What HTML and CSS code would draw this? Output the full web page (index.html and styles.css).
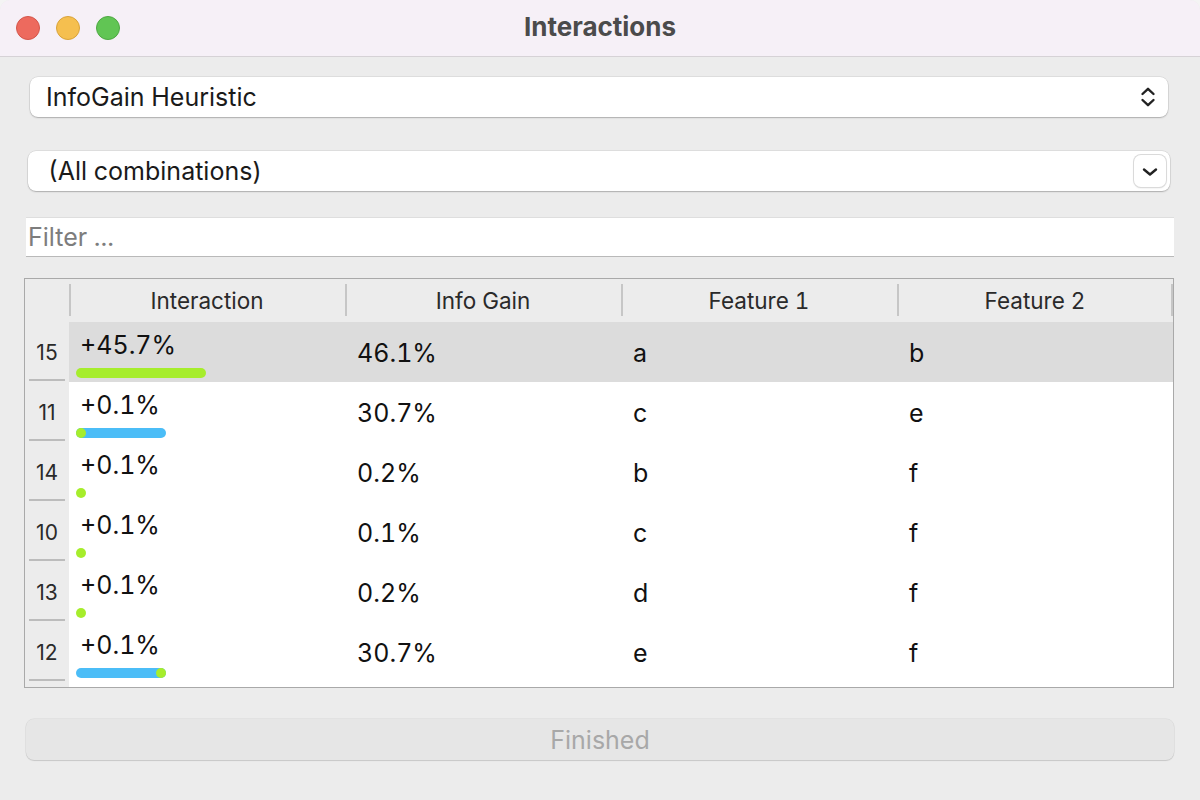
FILE: index.html
```html
<!DOCTYPE html>
<html>
<head>
<meta charset="utf-8">
<link rel="stylesheet" href="styles.css">
</head>
<body>
<div class="window">
  <div class="titlebar">
    <div class="lights">
      <span class="light red"></span>
      <span class="light yellow"></span>
      <span class="light green"></span>
    </div>
    <div class="title">Interactions</div>
  </div>
  <div class="content">
    <div class="combo combo-a">
      <span class="combo-text">InfoGain Heuristic</span>
      <svg class="updown" width="16" height="22" viewBox="0 0 16 22">
        <path d="M2.5 8 L8 2.8 L13.5 8" fill="none" stroke="#222" stroke-width="2.4" stroke-linecap="round" stroke-linejoin="round"/>
        <path d="M2.5 14 L8 19.2 L13.5 14" fill="none" stroke="#222" stroke-width="2.4" stroke-linecap="round" stroke-linejoin="round"/>
      </svg>
    </div>
    <div class="combo combo-b">
      <span class="combo-text">(All combinations)</span>
      <span class="drop-btn">
        <svg width="16" height="10" viewBox="0 0 16 10">
          <path d="M2 2.5 L8 7.5 L14 2.5" fill="none" stroke="#222" stroke-width="2.4" stroke-linecap="round" stroke-linejoin="round"/>
        </svg>
      </span>
    </div>
    <div class="filter">Filter ...</div>
    <div class="table">
      <div class="thead">
        <div class="th corner"></div>
        <div class="th">Interaction</div>
        <div class="th">Info Gain</div>
        <div class="th">Feature 1</div>
        <div class="th">Feature 2</div>
      </div>
      <div class="tbody">
        <div class="tr selected">
          <div class="rn">15</div>
          <div class="td inter">
            <div class="itext">+45.7%</div>
            <div class="bar"><span class="seg green" style="width:130px"></span></div>
          </div>
          <div class="td">46.1%</div>
          <div class="td">a</div>
          <div class="td">b</div>
        </div>
        <div class="tr">
          <div class="rn">11</div>
          <div class="td inter">
            <div class="itext">+0.1%</div>
            <div class="bar"><span class="seg blue" style="width:90px"></span><span class="dot" style="left:0px"></span></div>
          </div>
          <div class="td">30.7%</div>
          <div class="td">c</div>
          <div class="td">e</div>
        </div>
        <div class="tr">
          <div class="rn">14</div>
          <div class="td inter">
            <div class="itext">+0.1%</div>
            <div class="bar"><span class="dot" style="left:0px"></span></div>
          </div>
          <div class="td">0.2%</div>
          <div class="td">b</div>
          <div class="td">f</div>
        </div>
        <div class="tr">
          <div class="rn">10</div>
          <div class="td inter">
            <div class="itext">+0.1%</div>
            <div class="bar"><span class="dot" style="left:0px"></span></div>
          </div>
          <div class="td">0.1%</div>
          <div class="td">c</div>
          <div class="td">f</div>
        </div>
        <div class="tr">
          <div class="rn">13</div>
          <div class="td inter">
            <div class="itext">+0.1%</div>
            <div class="bar"><span class="dot" style="left:0px"></span></div>
          </div>
          <div class="td">0.2%</div>
          <div class="td">d</div>
          <div class="td">f</div>
        </div>
        <div class="tr">
          <div class="rn">12</div>
          <div class="td inter">
            <div class="itext">+0.1%</div>
            <div class="bar"><span class="seg blue" style="width:90px"></span><span class="dot" style="left:80px"></span></div>
          </div>
          <div class="td">30.7%</div>
          <div class="td">e</div>
          <div class="td">f</div>
        </div>
      </div>
    </div>
    <div class="finish">Finished</div>
  </div>
</div>
</body>
</html>
```

FILE: styles.css
```css
* { box-sizing: border-box; }
html, body {
  margin: 0;
  padding: 0;
  background: #f4f4f4;
}
body {
  font-family: Inter, "Liberation Sans", Arial, sans-serif;
  color: #111;
  font-variant-numeric: tabular-nums;
}
.window {
  width: 1200px;
  height: 800px;
  background: #ececec;
  border-radius: 10px 10px 0 0;
  overflow: hidden;
  display: flex;
  flex-direction: column;
}
.titlebar {
  height: 57px;
  background: #f6f0f7;
  border-bottom: 1px solid #d6d2d6;
  position: relative;
  display: flex;
  align-items: center;
  justify-content: center;
  flex: none;
}
.lights {
  position: absolute;
  left: 16px;
  top: 16px;
  display: flex;
  gap: 16px;
}
.light {
  width: 24px;
  height: 24px;
  border-radius: 50%;
  display: block;
}
.light.red { background: #ed6a5e; border: 1px solid #d4564b; }
.light.yellow { background: #f5bf4f; border: 1px solid #d9a33a; }
.light.green { background: #61c554; border: 1px solid #4ea843; }
.title {
  font-size: 26px;
  font-weight: 700;
  color: #4b4b4b;
  margin-top: -3px;
}
.content {
  display: flex;
  flex-direction: column;
  flex: 1;
}
.combo {
  height: 40px;
  background: #fff;
  border-radius: 8px;
  display: flex;
  align-items: center;
  box-shadow: 0 0 0 0.5px rgba(0,0,0,0.12), 0 1px 1.5px rgba(0,0,0,0.22);
  font-size: 25px;
  color: #1a1a1a;
}
.combo-a {
  margin: 20px 32px 0 30px;
  padding: 0 12px 0 16px;
  justify-content: space-between;
}
.combo-b {
  margin: 34px 30px 0 28px;
  padding: 0 4px 0 20px;
  justify-content: space-between;
}
.updown { display: block; }
.drop-btn {
  width: 32px;
  height: 32px;
  border-radius: 7px;
  background: #fff;
  box-shadow: 0 0 0 1px #dadada, 0 1px 2px rgba(0,0,0,0.15);
  display: flex;
  align-items: center;
  justify-content: center;
}
.drop-btn svg { display: block; margin-top: 1px; }
.filter {
  margin: 26px 26px 0 26px;
  height: 40px;
  background: #fff;
  border-top: 1px solid #dedede;
  border-bottom: 1px solid #b9b9b9;
  font-size: 25px;
  color: #7d7d7d;
  display: flex;
  align-items: center;
  padding-left: 2px;
}
.table {
  margin: 21px 26px 0 24px;
  height: 410px;
  border: 1px solid #a9a9a9;
  background: #fff;
  display: flex;
  flex-direction: column;
}
.thead {
  display: grid;
  grid-template-columns: 44px 276px 276px 276px 276px;
  height: 43px;
  background: #ececec;
  flex: none;
}
.th {
  font-size: 22.5px;
  color: #2a2a2a;
  display: flex;
  align-items: center;
  justify-content: center;
  position: relative;
}
.th::before {
  content: "";
  position: absolute;
  left: 0;
  top: 5px;
  bottom: 6px;
  width: 2px;
  background: #c6c6c6;
}
.th.corner::before { display: none; }
.th:last-child::after {
  content: "";
  position: absolute;
  right: 0;
  top: 5px;
  bottom: 6px;
  width: 2px;
  background: #c6c6c6;
}
.tbody {
  flex: 1;
  display: flex;
  flex-direction: column;
  background: linear-gradient(to right, #ececec 44px, #fff 44px);
}
.tr {
  display: grid;
  grid-template-columns: 44px 276px 276px 276px 276px;
  height: 60px;
  flex: none;
}
.tr.selected .td { background: #dcdcdc; }
.rn {
  background: #ececec;
  font-size: 21px;
  font-variant-numeric: normal;
  color: #2a2a2a;
  display: flex;
  align-items: center;
  justify-content: center;
  position: relative;
  padding-top: 1px;
}
.rn::after {
  content: "";
  position: absolute;
  left: 4px;
  right: 4px;
  bottom: 1px;
  height: 2px;
  background: #bcbcbc;
}
.td {
  font-size: 25px;
  color: #111;
  display: flex;
  align-items: center;
  padding-left: 12px;
  padding-top: 1px;
}
.td.inter {
  flex-direction: column;
  align-items: flex-start;
  justify-content: flex-start;
  padding-left: 7px;
  padding-top: 0;
}
.itext {
  padding-left: 4px;
  margin-top: 9px;
  line-height: 28px;
}
.bar {
  position: relative;
  height: 10px;
  width: 140px;
  margin-top: 9px;
}
.seg {
  position: absolute;
  left: 0;
  top: 0;
  height: 10px;
  border-radius: 5px;
}
.seg.green { background: #a6ed2c; }
.seg.blue { background: #4bbdf7; }
.dot {
  position: absolute;
  top: 0;
  width: 10px;
  height: 10px;
  border-radius: 50%;
  background: #a6ed2c;
}
.finish {
  margin: 31px 26px 0 26px;
  height: 41px;
  border-radius: 8px;
  background: #e6e6e6;
  box-shadow: 0 0 0 0.5px rgba(0,0,0,0.08), 0 1px 1px rgba(0,0,0,0.12);
  font-size: 25px;
  color: #a8a8a8;
  display: flex;
  align-items: center;
  justify-content: center;
}
```
